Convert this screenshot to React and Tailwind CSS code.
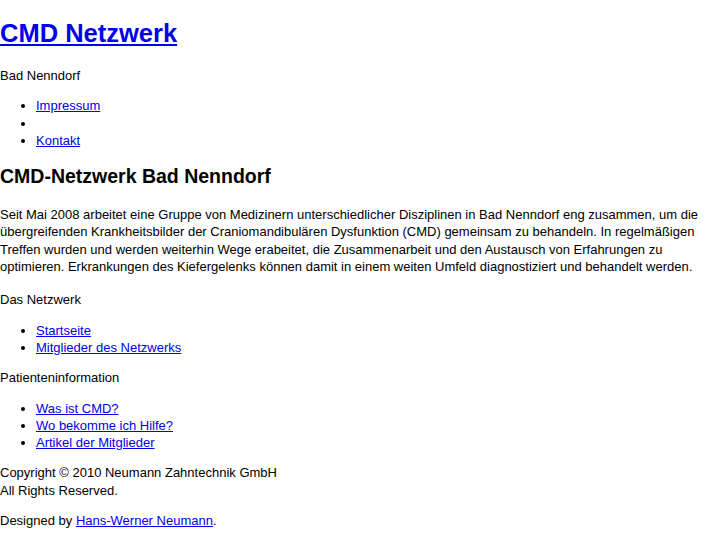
import React from "react";

const Link = ({ children }) => (
  <a href="#" className="text-[#0000ee] underline">
    {children}
  </a>
);

const List = ({ items }) => (
  <ul className="list-disc pl-[36px] my-[13px]">
    {items.map((item, i) => (
      <li key={i}>{item ? <Link>{item}</Link> : "\u00a0"}</li>
    ))}
  </ul>
);

export default function App() {
  return (
    <div className="bg-white text-black text-[13px] leading-[17.3px] font-['Liberation_Sans',Arial,sans-serif] pb-[10px]">
      <h1 className="text-[25.5px] font-bold leading-[31px] mt-[18px] mb-[18px]">
        <Link>CMD Netzwerk</Link>
      </h1>
      <p className="my-[13px]">Bad Nenndorf</p>
      <List items={["Impressum", "", "Kontakt"]} />
      <h2 className="text-[19.5px] font-bold leading-[23px] mt-[16px] mb-[18px]">
        CMD-Netzwerk Bad Nenndorf
      </h2>
      <p className="mt-[13px] mb-[16px]">
        Seit Mai 2008 arbeitet eine Gruppe von Medizinern unterschiedlicher
        Disziplinen in Bad Nenndorf eng zusammen, um die übergreifenden
        Krankheitsbilder der Craniomandibulären Dysfunktion (CMD) gemeinsam zu
        behandeln. In regelmäßigen Treffen wurden und werden weiterhin Wege
        erabeitet, die Zusammenarbeit und den Austausch von Erfahrungen zu
        optimieren. Erkrankungen des Kiefergelenks können damit in einem weiten
        Umfeld diagnostiziert und behandelt werden.
      </p>
      <p className="my-[13px]">Das Netzwerk</p>
      <List items={["Startseite", "Mitglieder des Netzwerks"]} />
      <p className="my-[12.5px]">Patienteninformation</p>
      <List items={["Was ist CMD?", "Wo bekomme ich Hilfe?", "Artikel der Mitglieder"]} />
      <p className="my-[12.5px]">
        Copyright © 2010 Neumann Zahntechnik GmbH
        <br />
        All Rights Reserved.
      </p>
      <p className="mt-[12px] mb-[13px]">
        Designed by <Link>Hans-Werner Neumann</Link>.
      </p>
    </div>
  );
}
